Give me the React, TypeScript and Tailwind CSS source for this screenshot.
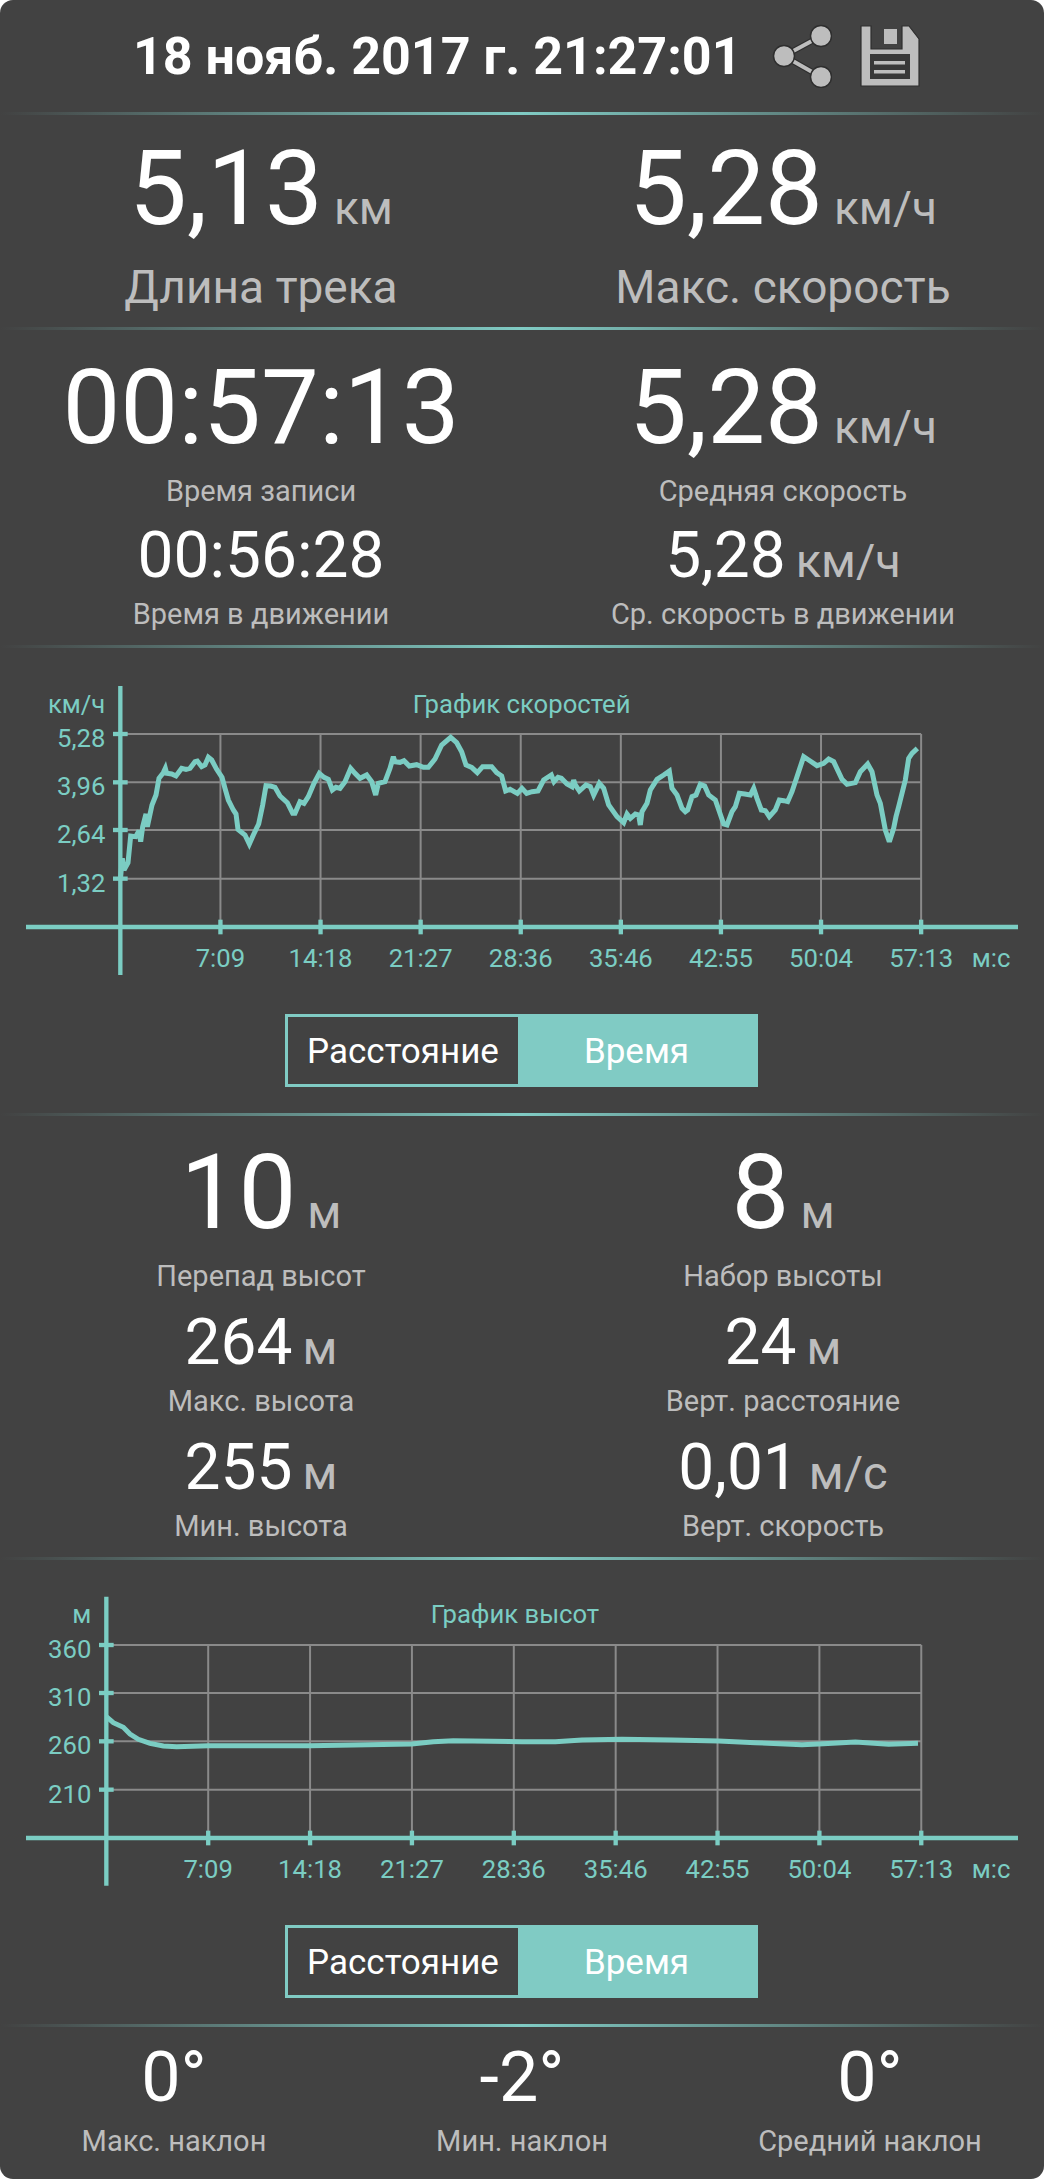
const Divider = () => (
  <div className="h-[3px] w-full bg-[linear-gradient(90deg,#424242_0%,#80cbc4_50%,#424242_100%)]" />
);
const Value = ({ v, u, kind }: { v: string; u?: string; kind: "big" | "small" | "angle" }) => (
  <div
    className={
      "whitespace-nowrap leading-none text-white " +
      (kind === "big" ? "text-[103px]" : kind === "small" ? "text-[64px]" : "text-[70px]")
    }
  >
    {v}
    {u ? (
      <span className={"text-[#bdbdbd] " + (kind === "big" ? "ml-[11px] text-[46px]" : "ml-[10px] text-[47px]")}>{u}</span>
    ) : null}
  </div>
);
const Stat = ({ v, u, kind, label, cls, lcls }: any) => (
  <div className={"flex flex-col items-center justify-between " + cls}>
    <Value v={v} u={u} kind={kind} />
    <div className={"leading-none text-[#bdbdbd] " + (lcls || "text-[29px]")}>{label}</div>
  </div>
);
const speed1 = "361,660 367,595 372,630 384,608 392,528 407,530 417,512 422,545 428,500 438,462 442,500 456,435 468,405 477,355 490,338 496,325 500,340 515,342 528,348 545,325 558,328 570,325 585,305 592,303 605,320 615,315 625,292 635,300 650,328 666,352 675,385 685,420 700,450 708,462 714,508 735,525 748,552 760,525 776,492 788,435 798,377 812,378 825,382 840,408 862,428 878,460 885,460 900,425 912,430 925,410 942,370 958,340 972,352 985,358 997,390 1008,382 1020,385 1035,365 1052,325 1065,340 1080,355 1100,345 1115,365 1127,405 1135,370 1155,365 1170,325 1180,290 1185,305 1200,307 1212,302 1228,318 1250,314 1270,322 1285,322 1305,297 1325,255 1352,232 1370,248 1385,275 1398,315 1415,322 1432,338 1448,320 1475,320 1490,338 1505,348 1517,393 1530,388 1552,400";
const speed2: [number, number][] = [[0,385],[14,400],[30,395],[48,393],[65,360],[88,345],[96,365],[108,352],[118,355],[135,372],[150,380],[155,360],[160,375],[172,393],[192,375],[205,380],[215,405],[232,370],[245,385],[260,435],[285,470],[305,488],[315,462],[325,475],[340,462],[350,465],[355,495],[360,455],[375,430],[385,390],[405,358],[425,345],[442,333],[450,385],[465,405],[480,445],[490,455],[497,450],[510,410],[522,405],[535,373],[548,378],[560,405],[580,420],[605,492],[615,495],[630,455],[640,440],[652,400],[668,402],[685,405],[695,385],[705,415],[718,450],[730,452],[742,470],[760,450],[772,420],[785,422],[797,425],[810,395],[845,290],[860,300],[885,317],[905,310],[920,297],[935,305],[960,358],[975,373],[1000,368],[1015,335],[1037,312],[1050,335],[1065,405],[1075,430],[1090,510],[1102,545],[1115,505],[1122,470],[1130,440],[1150,360],[1160,295],[1170,280],[1186,265]];
const speedPts = speed1 + " " + speed2.map(([x, y]) => `${x + 1566},${y}`).join(" ");
const elev2: [number, number][] = [[100,485],[180,480],[300,478],[450,480],[590,483],[700,488],[840,494],[890,492],[1000,486],[1100,493],[1188,490]];
const elevPts = "319,410 340,428 370,442 390,462 415,478 450,490 490,498 530,500 625,497 930,497 1235,492 1300,485 1360,482 1566,485 " + elev2.map(([x, y]) => `${x + 1566},${y}`).join(" ");
const XL = ["7:09","14:18","21:27","28:36","35:46","42:55","50:04","57:13"];
const TEAL = "#7bcdc3";
const Chart = ({ x0, step, ys, yl, unit, title, titleX, pts, axisTop, axisBot, xAxis, labelY }: any) => {
  const right = x0 + step * 8;
  const top = ys[0];
  return (
    <svg width={1044} height={330} viewBox="0 0 3132 990" className="block">
      <g stroke="#8a8a8a" strokeWidth={6} fill="none">
        {ys.map((y: number) => <line key={y} x1={x0} x2={right} y1={y} y2={y} />)}
        {XL.map((_, i) => <line key={i} x1={x0 + step * (i + 1)} x2={x0 + step * (i + 1)} y1={top} y2={xAxis} />)}
      </g>
      <polyline points={pts} fill="none" stroke={TEAL} strokeWidth={15} strokeLinejoin="miter" strokeMiterlimit={3} />
      <g stroke={TEAL} strokeWidth={13}>
        <line x1={x0} x2={x0} y1={axisTop} y2={axisBot} />
        <line x1={78} x2={3054} y1={xAxis} y2={xAxis} />
        {ys.map((y: number) => <line key={y} x1={x0 - 22} x2={x0 + 22} y1={y} y2={y} />)}
        {XL.map((_, i) => <line key={i} x1={x0 + step * (i + 1)} x2={x0 + step * (i + 1)} y1={xAxis - 22} y2={xAxis + 22} />)}
      </g>
      <g fill={TEAL} fontFamily="Roboto, sans-serif" fontSize={77}>
        <text x={x0 - 45} y={axisTop + 80} textAnchor="end">{unit}</text>
        {yl.map((t: string, i: number) => <text key={t} x={x0 - 45} y={ys[i] + 39} textAnchor="end">{t}</text>)}
        {XL.map((t, i) => <text key={t} x={x0 + step * (i + 1)} y={labelY} textAnchor="middle">{t}</text>)}
        <text x={3031} y={labelY} textAnchor="end">м:с</text>
        <text x={titleX} y={axisTop + 80} textAnchor="middle">{title}</text>
      </g>
    </svg>
  );
};
const Toggle = () => (
  <div className="ml-[285px] flex h-[73px] w-[473px] border-[3px] border-[#80cbc4] text-[35px] text-white">
    <div className="flex w-[230px] items-center justify-center pt-[3px]">Расстояние</div>
    <div className="flex flex-1 items-center justify-center bg-[#80cbc4] pt-[3px]">Время</div>
  </div>
);
const Floppy = () => (
  <svg width={60} height={62} viewBox="0 0 60 62" className="block">
    <path d="M1 1H11V24H42V1H49L59 14V61H1Z" fill="#bdbdbd" stroke="#2e2e2e" strokeWidth="1.2" />
    <rect x="24" y="4" width="13" height="15" fill="#bdbdbd" />
    <rect x="10" y="29" width="40" height="25" fill="#383838" />
    <rect x="14" y="36" width="31" height="3.5" fill="#bdbdbd" />
    <rect x="14" y="45" width="31" height="3.5" fill="#bdbdbd" />
  </svg>
);
const Share = () => (
  <svg width={60} height={64} viewBox="0 0 60 64" className="block">
    <g stroke="#2e2e2e" strokeWidth="6.5"><line x1="12" y1="32" x2="49" y2="12" /><line x1="12" y1="32" x2="49" y2="53" /></g>
    <g stroke="#bdbdbd" strokeWidth="4"><line x1="12" y1="32" x2="49" y2="12" /><line x1="12" y1="32" x2="49" y2="53" /></g>
    <g fill="#bdbdbd" stroke="#2e2e2e" strokeWidth="1.5"><circle cx="12" cy="32" r="10.5" /><circle cx="49" cy="12" r="10.5" /><circle cx="49" cy="53" r="10.5" /></g>
  </svg>
);
export default function App() {
  return (
    <div className="h-[2179px] w-[1044px] overflow-hidden rounded-[13px] bg-[#424242] font-['Roboto',sans-serif]">
      <div className="flex h-[112px] items-center pl-[133px] pt-[2px]">
        <div className="whitespace-nowrap text-[52px] font-bold text-white">18 нояб. 2017 г. 21:27:01</div>
        <div className="-mt-[3px] ml-[30px] flex items-center gap-[28px]"><Share /><Floppy /></div>
      </div>
      <Divider />
      <div className="grid h-[212px] grid-cols-2 pt-[22px]">
        <Stat v="5,13" u="км" kind="big" cls="h-[173px]" lcls="text-[46px]" label="Длина трека" />
        <Stat v="5,28" u="км/ч" kind="big" cls="h-[173px]" lcls="text-[46px]" label="Макс. скорость" />
      </div>
      <Divider />
      <div className="grid h-[315px] grid-cols-2 pt-[26px]">
        <div className="flex flex-col items-center gap-[18px]">
          <Stat v="00:57:13" kind="big" cls="h-[150px]" label="Время записи" />
          <Stat v="00:56:28" kind="small" cls="h-[105px]" label="Время в движении" />
        </div>
        <div className="flex flex-col items-center gap-[18px]">
          <Stat v="5,28" u="км/ч" kind="big" cls="h-[150px]" label="Средняя скорость" />
          <Stat v="5,28" u="км/ч" kind="small" cls="h-[105px]" label="Ср. скорость в движении" />
        </div>
      </div>
      <Divider />
      <div className="h-[465px] pt-[12px]">
        <Chart x0={361} step={300.3} ys={[222, 367, 510, 656]} yl={["5,28", "3,96", "2,64", "1,32"]} unit="км/ч" title="График скоростей" titleX={1565} pts={speedPts} axisTop={78} axisBot={945} xAxis={801} labelY={922} />
        <div className="pt-[24px]"><Toggle /></div>
      </div>
      <Divider />
      <div className="grid h-[441px] grid-cols-2 pt-[25px]">
        <div className="flex flex-col items-center gap-[20px]">
          <Stat v="10" u="м" kind="big" cls="h-[150px]" label="Перепад высот" />
          <Stat v="264" u="м" kind="small" cls="h-[105px]" label="Макс. высота" />
          <Stat v="255" u="м" kind="small" cls="h-[105px]" label="Мин. высота" />
        </div>
        <div className="flex flex-col items-center gap-[20px]">
          <Stat v="8" u="м" kind="big" cls="h-[150px]" label="Набор высоты" />
          <Stat v="24" u="м" kind="small" cls="h-[105px]" label="Верт. расстояние" />
          <Stat v="0,01" u="м/с" kind="small" cls="h-[105px]" label="Верт. скорость" />
        </div>
      </div>
      <Divider />
      <div className="h-[464px] pt-[20px]">
        <Chart x0={319} step={305.6} ys={[195, 339, 484, 629]} yl={["360", "310", "260", "210"]} unit="м" title="График высот" titleX={1545} pts={elevPts} axisTop={50} axisBot={917} xAxis={774} labelY={895} />
        <div className="pt-[15px]"><Toggle /></div>
      </div>
      <Divider />
      <div className="grid grid-cols-3 pt-[15px]">
        <Stat v="0°" kind="angle" cls="h-[114px]" label="Макс. наклон" />
        <Stat v="-2°" kind="angle" cls="h-[114px]" label="Мин. наклон" />
        <Stat v="0°" kind="angle" cls="h-[114px]" label="Средний наклон" />
      </div>
    </div>
  );
}
